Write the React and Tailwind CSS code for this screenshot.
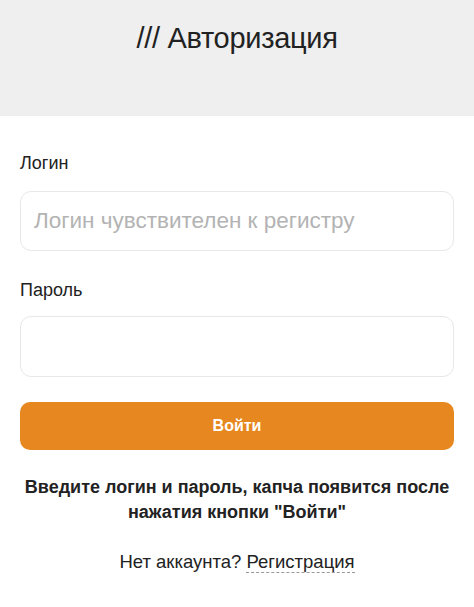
import React from "react";

const App = () => {
  return (
    <div className="min-h-screen bg-white text-[#222] font-['Liberation_Sans',Arial,sans-serif]">
      <div className="h-[116px] bg-[#efefef] flex justify-center pt-[18px]">
        <h1 className="text-[29px] font-light leading-[40px] text-[#222] tracking-[-0.3px]">
          /// Авторизация
        </h1>
      </div>
      <form className="px-[20px] pt-[35px]" onSubmit={(e) => e.preventDefault()}>
        <label className="block text-[18px] leading-[24px] mb-[16px]">Логин</label>
        <input
          type="text"
          placeholder="Логин чувствителен к регистру"
          className="block w-full h-[60px] rounded-[11px] border border-[#e8e8e8] px-[13px] text-[22.5px] placeholder:text-[#b3b3b3] outline-none"
        />
        <label className="block text-[18px] leading-[24px] mt-[27px] mb-[14px]">Пароль</label>
        <input
          type="password"
          className="block w-full h-[61px] rounded-[11px] border border-[#e8e8e8] px-[14px] text-[21px] outline-none"
        />
        <button
          type="submit"
          className="block w-full h-[48px] mt-[25px] rounded-[10px] bg-[#e6871f] text-white text-[16px] font-bold"
        >
          Войти
        </button>
        <p className="mt-[25px] -mx-[4px] text-center text-[18px] font-bold leading-[25px] text-[#222]">
          Введите логин и пароль, капча появится после
          <br />
          нажатия кнопки "Войти"
        </p>
        <p className="mt-[24px] text-center text-[18.5px] leading-[26px] text-[#222]">
          Нет аккаунта?{" "}
          <a href="#" className="border-b border-dashed border-[#999]">
            Регистрация
          </a>
        </p>
      </form>
    </div>
  );
};

export default App;
